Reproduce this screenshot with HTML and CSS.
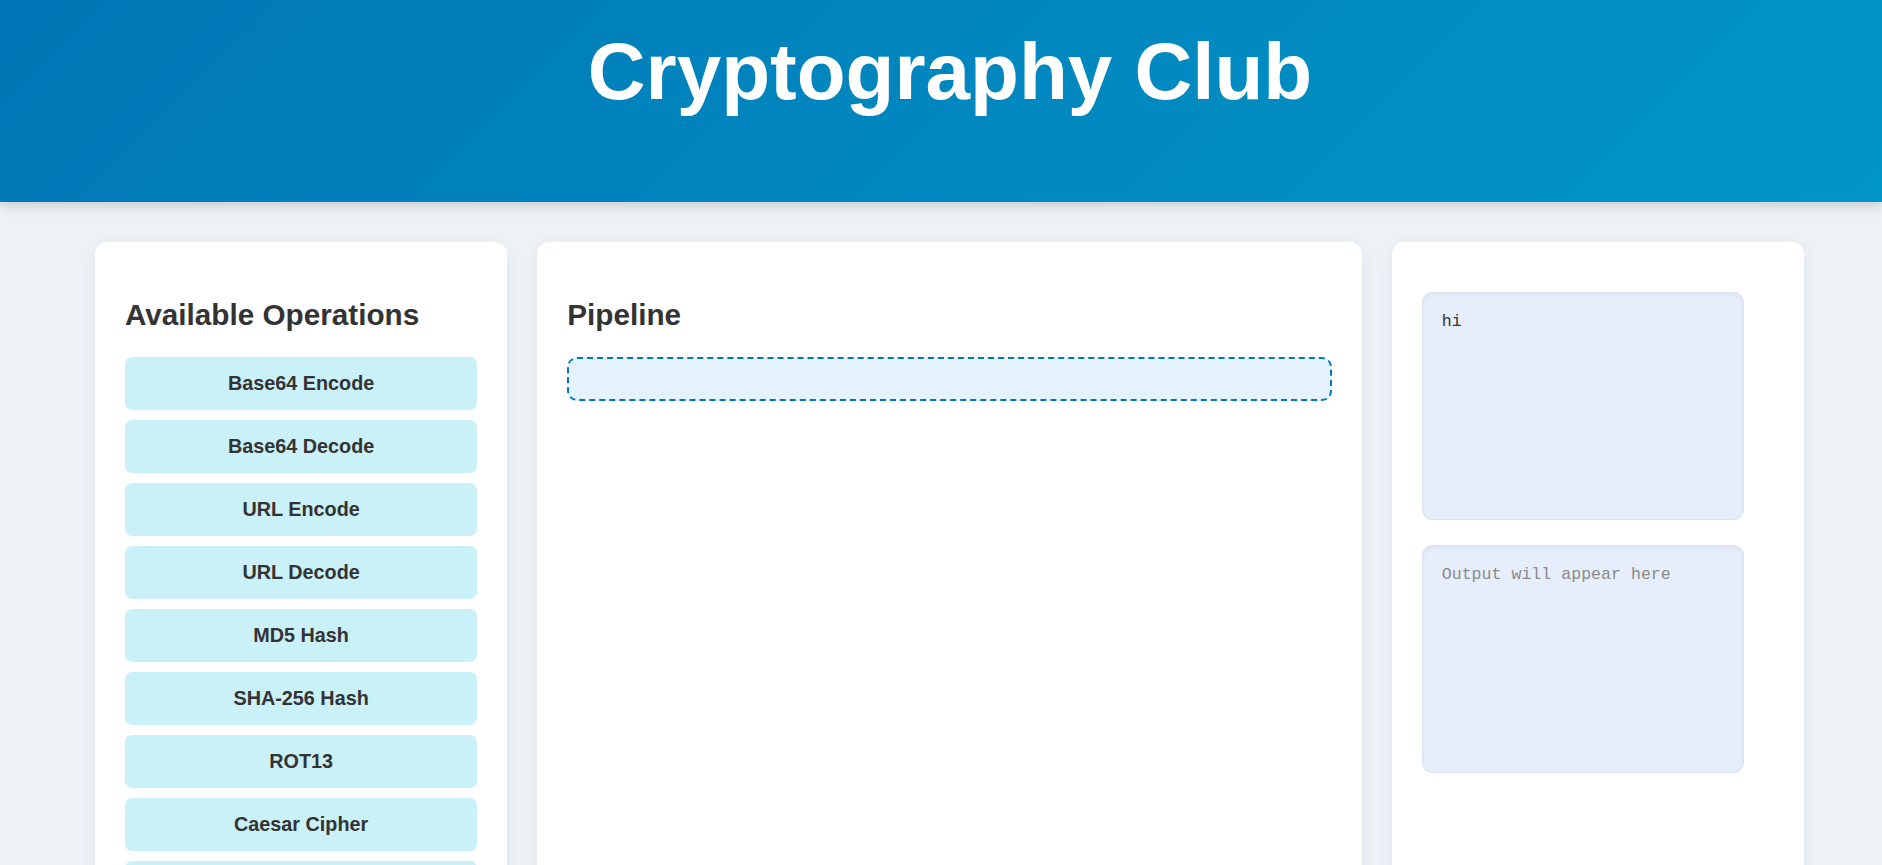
FILE: index.html
```html
<!DOCTYPE html>
<html lang="en">
<head>
<meta charset="utf-8">
<title>Cryptography Club</title>
<link rel="stylesheet" href="styles.css">
</head>
<body>
<header class="site-header">
  <h1 class="site-title">Cryptography Club</h1>
</header>
<main class="layout">
  <section class="card ops">
    <h2 class="card-title">Available Operations</h2>
    <div class="op-list">
      <button class="op-btn">Base64 Encode</button>
      <button class="op-btn">Base64 Decode</button>
      <button class="op-btn">URL Encode</button>
      <button class="op-btn">URL Decode</button>
      <button class="op-btn">MD5 Hash</button>
      <button class="op-btn">SHA-256 Hash</button>
      <button class="op-btn">ROT13</button>
      <button class="op-btn">Caesar Cipher</button>
      <button class="op-btn">Hex Encode</button>
      <button class="op-btn">Hex Decode</button>
    </div>
  </section>
  <section class="card pipeline">
    <h2 class="card-title">Pipeline</h2>
    <div class="dropzone"></div>
  </section>
  <section class="card io">
    <div class="io-stack">
      <textarea class="io-box">hi</textarea>
      <textarea class="io-box" placeholder="Output will appear here" readonly></textarea>
    </div>
  </section>
</main>
</body>
</html>
```
FILE: styles.css
```css
html, body {
  margin: 0;
  padding: 0;
}
body {
  background: #eef2f7;
  font-family: "Liberation Sans", Arial, sans-serif;
  color: #333333;
  overflow: hidden;
}
.site-header {
  height: 202px;
  box-sizing: border-box;
  padding-top: 26px;
  background: linear-gradient(135deg, #0077b6 0%, #0096c7 100%);
  box-shadow: 0 4px 12px rgba(0, 0, 0, 0.16);
  position: relative;
  z-index: 1;
}
.site-title {
  margin: 0;
  padding-left: 18px;
  text-align: center;
  color: #ffffff;
  font-size: 80px;
  font-weight: 700;
  line-height: 92px;
}
.layout {
  display: grid;
  grid-template-columns: 1fr 2fr 1fr;
  gap: 30px;
  padding: 40px 78px 40px 95px;
}
.card {
  background: #ffffff;
  border-radius: 12px;
  padding: 30px;
  box-shadow: 0 4px 16px rgba(30, 50, 90, 0.07);
  min-height: 700px;
}
.card-title {
  margin: 25.8px 0 25.2px;
  font-size: 29.7px;
  font-weight: 700;
  color: #333333;
  line-height: 34px;
}
.op-list {
  display: flex;
  flex-direction: column;
  gap: 10px;
}
.op-btn {
  display: block;
  width: 100%;
  border: none;
  border-radius: 7px;
  background: #caf0f8;
  color: #333333;
  font-family: "Liberation Sans", Arial, sans-serif;
  font-size: 19.8px;
  font-weight: 700;
  line-height: 23px;
  padding: 15px 10px;
  text-align: center;
}
.dropzone {
  height: 44px;
  box-sizing: border-box;
  border: 2px dashed #0077b6;
  border-radius: 10px;
  background: #e3f2fd;
}
.io-stack {
  display: flex;
  flex-direction: column;
  gap: 25px;
  margin-top: 20px;
}
.io-box {
  display: block;
  width: 322px;
  height: 228px;
  box-sizing: border-box;
  padding: 19px 19px;
  border: 1px solid #dbe3f0;
  border-radius: 10px;
  background: #e7eefb;
  box-shadow: inset 0 2px 4px rgba(40, 60, 100, 0.06);
  font-family: "Liberation Mono", "Courier New", monospace;
  font-size: 16.6px;
  color: #333333;
  resize: none;
  outline: none;
}
.io-box::placeholder {
  color: #8a8a8a;
}
```
